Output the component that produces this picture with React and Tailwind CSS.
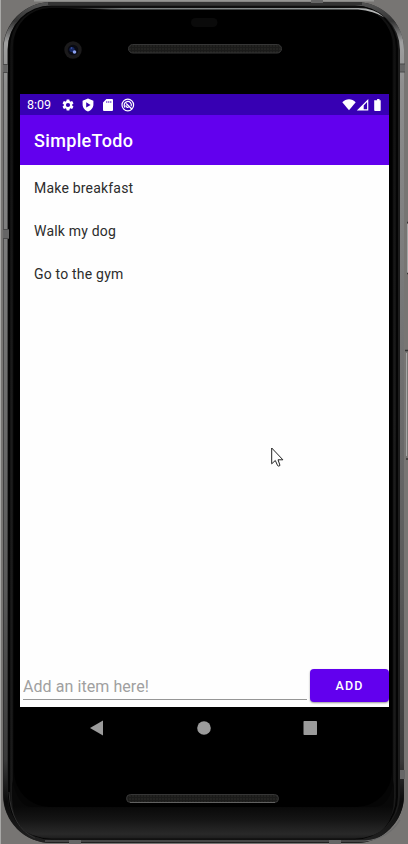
import React from "react";

const todos = ["Make breakfast", "Walk my dog", "Go to the gym"];

function DeviceFrame() {
  return (
    <svg className="absolute inset-0" width="408" height="844" viewBox="0 0 408 844" fill="none">
      <defs>
        <linearGradient id="rail" x1="0" y1="0" x2="0" y2="844" gradientUnits="userSpaceOnUse">
          <stop offset="0" stopColor="#5a5a5a" />
          <stop offset="0.025" stopColor="#333" />
          <stop offset="0.05" stopColor="#a0a0a0" />
          <stop offset="0.1" stopColor="#8e8e8e" />
          <stop offset="0.3" stopColor="#7c7c7c" />
          <stop offset="0.7" stopColor="#595959" />
          <stop offset="0.9" stopColor="#3a3a3a" />
          <stop offset="0.95" stopColor="#0a0a0a" />
          <stop offset="1" stopColor="#222" />
        </linearGradient>
        <linearGradient id="chin" x1="0" y1="806" x2="0" y2="839" gradientUnits="userSpaceOnUse">
          <stop offset="0" stopColor="#080808" />
          <stop offset="0.4" stopColor="#141414" />
          <stop offset="0.85" stopColor="#292929" />
          <stop offset="1" stopColor="#1c1c1c" />
        </linearGradient>
        <linearGradient id="edge" x1="0" y1="0" x2="0" y2="844" gradientUnits="userSpaceOnUse">
          <stop offset="0" stopColor="#101010" />
          <stop offset="0.5" stopColor="#1c1c1c" />
          <stop offset="1" stopColor="#191919" />
        </linearGradient>
        <linearGradient id="shine" x1="58" y1="0" x2="385" y2="0" gradientUnits="userSpaceOnUse">
          <stop offset="0" stopColor="#777" stopOpacity="0" />
          <stop offset="0.2" stopColor="#777c7c" />
          <stop offset="0.85" stopColor="#909696" />
          <stop offset="1" stopColor="#c0c0c0" />
        </linearGradient>
        <pattern id="mesh" width="3" height="3" patternUnits="userSpaceOnUse">
          <rect width="3" height="3" fill="#1b1b1a" />
          <path d="M0 1h2" stroke="#2b2b27" />
        </pattern>
      </defs>
      <rect width="408" height="844" fill="#777573" />
      <rect width="1" height="844" fill="#a9a9a7" />
      <path d="M34 0.8H374" stroke="#969694" strokeWidth="1.6" />
      <rect x="3" y="2" width="401" height="841" rx="48" fill="#1c1c1c" />
      <rect x="5.5" y="4" width="396.5" height="837" rx="46" stroke="url(#rail)" strokeWidth="4" />
      <path d="M48 3.5H362" stroke="#343434" strokeWidth="3" />
      <rect x="8" y="5.5" width="390" height="834" rx="43" fill="#050505" />
      <rect x="11.5" y="7.5" width="383" height="830" rx="40" stroke="url(#edge)" strokeWidth="2.5" />
      <path d="M12 780V797Q12 838 50 838H356Q394 838 394 797V780Q390 807 375 807H31Q18 807 12 780Z" fill="url(#chin)" />
      <rect x="14" y="8" width="378" height="799" rx="36" fill="#000" />
      <path d="M60 8H358Q375 8 384.5 17.5Q374 11 358 9.6H110Z" fill="url(#shine)" />
      <path d="M45 841H365Q388 839 400 820" stroke="#6b6b6b" strokeWidth="1.2" />
      <path d="M9 792Q11 827 35 838" stroke="#303030" />
      <path d="M3 65h5v7h-5zM3 230h6v8h-6zM400 64h5v8h-5zM400 770h5v9h-5zM311 0h12v3h-12zM69 840h12v4h-12zM329 840h12v4h-12z" fill="#666" />
      <path d="M3 64.5h5M3 72.5h5M3 229.5h6M3 238.5h6M400 64h5M400 72h5" stroke="#4a4a4a" />
      <path d="M407.5 224V273M406.5 353V456" stroke="#a5a5a5" />
      <path d="M407 222.5h1M407 273.5h1M405 350.5h3M406 459h2" stroke="#333" strokeWidth="1.5" />
      <circle cx="73" cy="50" r="8.7" fill="#1b1a1b" />
      <circle cx="73" cy="50" r="5.3" fill="#090a12" />
      <circle cx="72" cy="49.5" r="2.6" fill="#17265f" />
      <circle cx="74.5" cy="52" r="1.8" fill="#8da2f2" />
      <circle cx="71.5" cy="48" r="0.8" fill="#405cb2" />
      <rect x="191" y="18" width="26.5" height="9" rx="4.5" fill="#0a0a0a" />
      <rect x="128.5" y="44.5" width="153" height="8.5" rx="4.2" fill="url(#mesh)" stroke="#363636" />
      <rect x="126.5" y="794.5" width="152" height="8" rx="4" fill="url(#mesh)" stroke="#363636" />
      <path d="M130 802.5H275" stroke="#606060" />
    </svg>
  );
}

function Gear() {
  return (
    <svg width="14" height="14" viewBox="0 0 24 24" fill="#fff">
      <path d="M19.14 12.94c.04-.3.06-.61.06-.94 0-.32-.02-.64-.07-.94l2.03-1.58a.49.49 0 0 0 .12-.61l-1.92-3.32a.488.488 0 0 0-.59-.22l-2.39.96c-.5-.38-1.03-.7-1.62-.94l-.36-2.54a.484.484 0 0 0-.48-.41h-3.84c-.24 0-.43.17-.47.41l-.36 2.54c-.59.24-1.13.57-1.62.94l-2.39-.96c-.22-.08-.47 0-.59.22L2.74 8.87c-.12.21-.08.47.12.61l2.03 1.58c-.05.3-.09.63-.09.94s.02.64.07.94l-2.03 1.58a.49.49 0 0 0-.12.61l1.92 3.32c.12.22.37.29.59.22l2.39-.96c.5.38 1.03.7 1.62.94l.36 2.54c.05.24.24.41.48.41h3.84c.24 0 .44-.17.47-.41l.36-2.54c.59-.24 1.13-.56 1.62-.94l2.39.96c.22.08.47 0 .59-.22l1.92-3.32c.12-.22.07-.47-.12-.61l-2.01-1.58zM12 15.6A3.6 3.6 0 1 1 12 8.4a3.6 3.6 0 0 1 0 7.2z" />
    </svg>
  );
}

function StatusBar() {
  return (
    <div className="flex h-[21px] shrink-0 items-center bg-[#3700b3] px-[7px] text-white">
      <span className="w-[33.5px] pt-px text-[12.5px] leading-5">8:09</span>
      <div className="flex items-center gap-[6px]">
        <Gear />
        <svg width="14" height="14" viewBox="0 0 14 14">
          <path fill="#fff" fillRule="evenodd" d="M7 .6L12.4 2.7V6.5C12.4 9.8 10 12.5 7 13.4C4 12.5 1.6 9.8 1.6 6.5V2.7ZM5.2 4.2V9.6L9.6 6.9Z" />
        </svg>
        <svg width="14" height="14" viewBox="0 0 14 14">
          <path fill="#fff" fillRule="evenodd" d="M5.4 1H11Q12 1 12 2V12Q12 13 11 13H3Q2 13 2 12V4.4ZM5.5 3V5H6.2V3ZM7.5 3V5H8.2V3ZM9.5 3V5H10.2V3Z" />
        </svg>
        <svg width="14" height="14" viewBox="0 0 14 14" fill="none" stroke="#fff">
          <circle cx="6.8" cy="7" r="5.8" strokeWidth="1.2" />
          <path d="M4.1 9.5A3.6 3.6 0 1 1 10.2 8.2" strokeWidth="1.2" />
          <path d="M5.2 5.5L11 11.2M5 7.2A2.1 2.1 0 0 0 7.6 9.3" strokeWidth="1.3" />
        </svg>
      </div>
      <svg className="ml-auto" width="40" height="14" viewBox="0 0 40 14">
        <path fill="#fff" d="M.3 4.2C4 .2 10 .2 13.7 4.2L7 12.3Z" />
        <path fill="#fff" fillRule="evenodd" d="M26.3 1V12.5H14.8ZM25.1 4L21.7 7.4V11.3H25.1Z" />
        <path fill="#fff" d="M34 2.2H35.1V1H37.5V2.2H38.7V12.2Q38.7 13 38 13H33.1Q32.2 13 32.2 12.2V2.2Z" />
      </svg>
    </div>
  );
}

function NavBar() {
  return (
    <div className="flex h-[42px] items-center pl-[70px]">
      <svg width="228" height="16" viewBox="0 0 228 16" fill="#9b9b9b">
        <path d="M0 8L13 .5V15.5Z" />
        <circle cx="114" cy="8" r="6.8" />
        <rect x="213.5" y="1" width="13.5" height="14" rx="0.7" />
      </svg>
    </div>
  );
}

export default function App() {
  return (
    <div className="relative h-[844px] w-[408px] overflow-hidden font-['Roboto',sans-serif]">
      <DeviceFrame />
      <div className="relative pl-5 pt-[94px]">
        <main className="flex h-[613px] w-[369px] flex-col bg-[#fefefe]">
          <StatusBar />
          <header className="flex h-[50px] shrink-0 items-center bg-[#6200ee] pl-[14px]">
            <h1 className="text-[18px] font-medium tracking-[0.35px] text-white">SimpleTodo</h1>
          </header>
          <ul className="flex-1 pt-[2px]">
            {todos.map((todo) => (
              <li key={todo} className="flex h-[43px] items-center pl-[14px] text-[14px] tracking-[0.2px] text-[#2c2c2c]">
                {todo}
              </li>
            ))}
          </ul>
          <form className="flex h-[39px] shrink-0 items-start" onSubmit={(e) => e.preventDefault()}>
            <input
              className="ml-[3px] h-8 w-[284px] border-b border-[#969696] bg-transparent pt-[6px] text-[16px] tracking-[0.07px] outline-none placeholder:text-[#a0a0a0]"
              placeholder="Add an item here!"
            />
            <button className="ml-[3px] mt-px h-[33px] w-[79px] rounded-[4px] bg-[#6200ee] pt-px text-[12.5px] font-medium tracking-[1.2px] text-white shadow-[0_1px_2px_rgba(0,0,0,0.4)]">
              ADD
            </button>
          </form>
        </main>
        <NavBar />
      </div>
      <svg className="absolute left-[271px] top-[447px]" width="14" height="21" viewBox="0 0 14 21">
        <path d="M.7 1V16.8L4.3 13.5L6.6 18.6Q7.8 19.8 9 18.4L7 12.8H11.9Z" fill="#fff" stroke="#222" strokeWidth="1" />
      </svg>
    </div>
  );
}
